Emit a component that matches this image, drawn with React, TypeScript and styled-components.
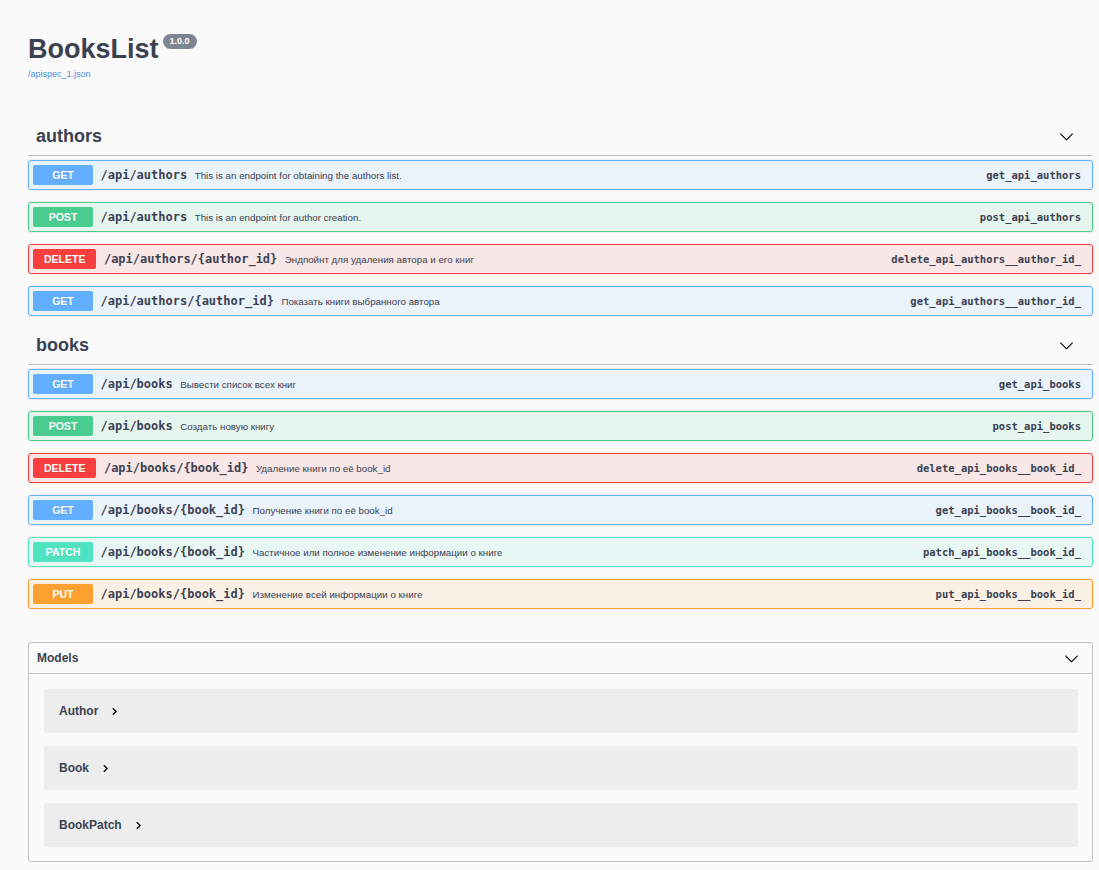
import React from 'react'
import styled, { createGlobalStyle } from 'styled-components'

const GlobalStyle = createGlobalStyle`
  body {
    margin: 0;
    background: #fafafa;
    font-family: 'Liberation Sans', Arial, sans-serif;
    color: #3b4151;
  }
`

type Method = 'GET' | 'POST' | 'DELETE' | 'PATCH' | 'PUT'

const methodColors: Record<Method, string> = {
  GET: '97, 175, 254',
  POST: '73, 204, 144',
  DELETE: '249, 62, 62',
  PATCH: '80, 227, 194',
  PUT: '252, 161, 48',
}

interface Operation {
  method: Method
  path: string
  summary: string
  operationId: string
}

const sections: { tag: string; ops: Operation[] }[] = [
  {
    tag: 'authors',
    ops: [
      { method: 'GET', path: '/api/authors', summary: 'This is an endpoint for obtaining the authors list.', operationId: 'get_api_authors' },
      { method: 'POST', path: '/api/authors', summary: 'This is an endpoint for author creation.', operationId: 'post_api_authors' },
      { method: 'DELETE', path: '/api/authors/{author_id}', summary: 'Эндпойнт для удаления автора и его книг', operationId: 'delete_api_authors__author_id_' },
      { method: 'GET', path: '/api/authors/{author_id}', summary: 'Показать книги выбранного автора', operationId: 'get_api_authors__author_id_' },
    ],
  },
  {
    tag: 'books',
    ops: [
      { method: 'GET', path: '/api/books', summary: 'Вывести список всех книг', operationId: 'get_api_books' },
      { method: 'POST', path: '/api/books', summary: 'Создать новую книгу', operationId: 'post_api_books' },
      { method: 'DELETE', path: '/api/books/{book_id}', summary: 'Удаление книги по её book_id', operationId: 'delete_api_books__book_id_' },
      { method: 'GET', path: '/api/books/{book_id}', summary: 'Получение книги по её book_id', operationId: 'get_api_books__book_id_' },
      { method: 'PATCH', path: '/api/books/{book_id}', summary: 'Частичное или полное изменение информации о книге', operationId: 'patch_api_books__book_id_' },
      { method: 'PUT', path: '/api/books/{book_id}', summary: 'Изменение всей информации о книге', operationId: 'put_api_books__book_id_' },
    ],
  },
]

const models = ['Author', 'Book', 'BookPatch']

const ArrowDown = () => (
  <svg width="15" height="15" viewBox="0 0 20 20" fill="#000">
    <path d="M17.418 6.109c.272-.268.709-.268.979 0s.271.701 0 .969l-7.908 7.83c-.27.268-.707.268-.979 0l-7.908-7.83c-.27-.268-.27-.701 0-.969.271-.268.709-.268.979 0L10 13.25l7.418-7.141z" />
  </svg>
)

const ArrowRight = () => (
  <svg width="15" height="15" viewBox="0 0 24 24" fill="#000">
    <path d="M10 6L8.59 7.41 13.17 12l-4.58 4.59L10 18l6-6z" />
  </svg>
)

export default function App() {
  return (
    <>
      <GlobalStyle />
      <S.Wrapper>
        <S.Info>
          <S.TitleRow>
            <S.Title>BooksList</S.Title>
            <S.Version>1.0.0</S.Version>
          </S.TitleRow>
          <S.SpecLink href="#">/apispec_1.json</S.SpecLink>
        </S.Info>

        {sections.map((section) => (
          <section key={section.tag}>
            <S.TagHeading>
              <span>{section.tag}</span>
              <S.Toggle>
                <ArrowDown />
              </S.Toggle>
            </S.TagHeading>
            <S.OpList>
              {section.ops.map((op) => (
                <S.Opblock key={op.operationId} $rgb={methodColors[op.method]}>
                  <S.MethodBadge $rgb={methodColors[op.method]}>{op.method}</S.MethodBadge>
                  <S.Path>{op.path}</S.Path>
                  <S.Summary>{op.summary}</S.Summary>
                  <S.OperationId>{op.operationId}</S.OperationId>
                </S.Opblock>
              ))}
            </S.OpList>
          </section>
        ))}

        <S.Models>
          <S.ModelsHeader>
            <span>Models</span>
            <S.ModelsToggle>
              <ArrowDown />
            </S.ModelsToggle>
          </S.ModelsHeader>
          <S.ModelList>
            {models.map((name) => (
              <S.ModelContainer key={name}>
                <S.ModelTitle>{name}</S.ModelTitle>
                <S.ModelToggle>
                  <ArrowRight />
                </S.ModelToggle>
              </S.ModelContainer>
            ))}
          </S.ModelList>
        </S.Models>
      </S.Wrapper>
    </>
  )
}

export const S = {
  Wrapper: styled.div`
    padding: 0 6px 20px 28px;
  `,
  Info: styled.div`
    padding-top: 33px;
    margin-bottom: 35px;
  `,
  TitleRow: styled.div`
    display: flex;
    align-items: flex-start;
  `,
  Title: styled.h2`
    margin: 0;
    font-size: 27px;
    line-height: 32px;
    font-weight: 700;
    color: #3b4151;
  `,
  Version: styled.span`
    margin: 1px 0 0 4px;
    height: 15px;
    line-height: 15px;
    padding: 0 7px;
    border-radius: 10px;
    background: #7d8492;
    color: #fff;
    font-size: 9px;
    font-weight: 700;
  `,
  SpecLink: styled.a`
    display: block;
    margin-top: 3px;
    font-size: 9px;
    line-height: 12px;
    color: #4990e2;
    text-decoration: none;
  `,
  TagHeading: styled.h3`
    display: flex;
    align-items: center;
    justify-content: space-between;
    margin: 0 0 4px;
    padding: 9px 15px 7px 8px;
    font-size: 18px;
    line-height: 24px;
    font-weight: 700;
    color: #3b4151;
    border-bottom: 1px solid rgba(59, 65, 81, 0.3);
  `,
  Toggle: styled.span`
    display: flex;
    margin-right: 4px;
  `,
  OpList: styled.div`
    display: flex;
    flex-direction: column;
    gap: 12px;
    padding-bottom: 8px;
  `,
  Opblock: styled.div<{ $rgb: string }>`
    display: flex;
    align-items: center;
    padding: 4px 11px 4px 4px;
    border: 1px solid rgb(${(p) => p.$rgb});
    border-radius: 3px;
    background: rgba(${(p) => p.$rgb}, 0.1);
    box-shadow: 0 0 2px rgba(0, 0, 0, 0.19);
  `,
  MethodBadge: styled.span<{ $rgb: string }>`
    box-sizing: border-box;
    min-width: 60px;
    height: 20px;
    line-height: 20px;
    padding: 0 11px;
    border-radius: 2px;
    background: rgb(${(p) => p.$rgb});
    color: #fff;
    font-size: 10.5px;
    font-weight: 700;
    text-align: center;
    text-shadow: 0 1px 0 rgba(0, 0, 0, 0.1);
  `,
  Path: styled.span`
    padding: 0 7.5px;
    font-family: 'DejaVu Sans Mono', monospace;
    font-size: 12px;
    font-weight: 700;
    color: #3b4151;
  `,
  Summary: styled.span`
    font-size: 9.75px;
    color: #3b4151;
  `,
  OperationId: styled.span`
    margin-left: auto;
    font-family: 'DejaVu Sans Mono', monospace;
    font-size: 10.5px;
    font-weight: 700;
    color: #3b4151;
  `,
  Models: styled.div`
    margin-top: 25px;
    border: 1px solid rgba(59, 65, 81, 0.3);
    border-radius: 3px;
  `,
  ModelsHeader: styled.h4`
    display: flex;
    align-items: center;
    justify-content: space-between;
    margin: 0;
    padding: 7px 13px 7px 8px;
    font-size: 12px;
    line-height: 16px;
    font-weight: 700;
    color: #3b4151;
    border-bottom: 1px solid rgba(59, 65, 81, 0.3);
  `,
  ModelsToggle: styled.span`
    display: flex;
  `,
  ModelList: styled.div`
    display: flex;
    flex-direction: column;
    gap: 13px;
    padding: 15px 14px 14px 15px;
  `,
  ModelContainer: styled.div`
    display: flex;
    align-items: center;
    height: 44px;
    padding-left: 15px;
    border-radius: 3px;
    background: rgba(0, 0, 0, 0.05);
  `,
  ModelTitle: styled.span`
    font-size: 12px;
    font-weight: 700;
    color: #3b4151;
  `,
  ModelToggle: styled.span`
    display: flex;
    margin-left: 9px;
  `,
}
